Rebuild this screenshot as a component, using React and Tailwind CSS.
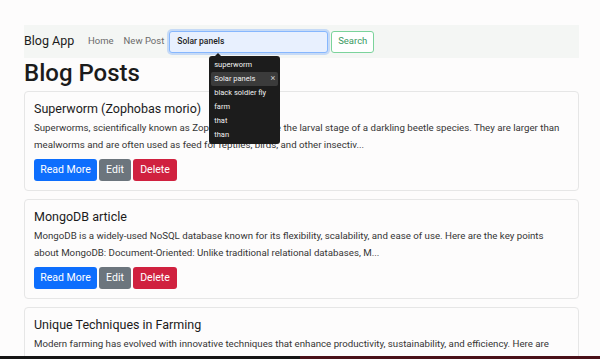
import React from "react";

const posts = [
  {
    title: "Superworm (Zophobas morio)",
    body: "Superworms, scientifically known as Zophobas morio, are the larval stage of a darkling beetle species. They are larger than mealworms and are often used as feed for reptiles, birds, and other insectiv...",
  },
  {
    title: "MongoDB article",
    body: "MongoDB is a widely-used NoSQL database known for its flexibility, scalability, and ease of use. Here are the key points about MongoDB: Document-Oriented: Unlike traditional relational databases, M...",
  },
  {
    title: "Unique Techniques in Farming",
    body: "Modern farming has evolved with innovative techniques that enhance productivity, sustainability, and efficiency. Here are some unique techniques that are transforming agriculture: Hydroponics: D...",
  },
];

const suggestions = ["superworm", "Solar panels", "black soldier fly", "farm", "that", "than"];

function PostCard({ post }) {
  return (
    <div className="mb-[8px] rounded-[4px] border border-[#e6e6e6] bg-[#fdfcfc] px-[9px] pt-[9px] pb-[9px]">
      <h5 className="mb-[2px] text-[12.5px] leading-[16px] text-[#1b1b1b]">{post.title}</h5>
      <p className="text-[9.7px] leading-[17px] text-[#353535]">{post.body}</p>
      <div className="mt-[6px] flex gap-[2px]">
        <button className="h-[22px] w-[63px] rounded-[3px] bg-[#0d6efd] text-[10.5px] text-white">Read More</button>
        <button className="h-[22px] w-[32px] rounded-[3px] bg-[#6c757d] text-[10.5px] text-white">Edit</button>
        <button className="h-[22px] w-[44px] rounded-[3px] bg-[#d0213f] text-[10.5px] text-white">Delete</button>
      </div>
    </div>
  );
}

export default function App() {
  return (
    <div
      className="flex h-[359px] w-[600px] flex-col overflow-hidden bg-[#fdfcfc]"
      style={{ fontFamily: 'Roboto, "Noto Sans", sans-serif' }}
    >
      <div className="flex-1 overflow-hidden pl-[24px] pr-[21px] pt-[25px]">
        {/* Navbar */}
        <nav className="flex h-[33px] items-center bg-[#f4f6f4]">
          <span className="w-[49px] text-[12.5px] whitespace-nowrap text-[#1b1b1b]">Blog App</span>
          <a className="ml-[15px] text-[9.5px] text-[#6a6a6a]">Home</a>
          <a className="ml-[10px] text-[9.5px] text-[#6a6a6a]">New Post</a>
          <div className="relative ml-[5px]">
            <div className="flex h-[22px] w-[159px] items-center rounded-[3px] border border-[#86b7fe] bg-[#e8f0fe] px-[7px] text-[8.5px] font-medium text-[#222] shadow-[0_0_0_2px_rgba(13,110,253,0.2)]">
              Solar panels
            </div>
            {/* autocomplete popup */}
            <div className="absolute left-[40px] top-[25px] z-10 w-[71px] rounded-[3px] bg-[#1c1c1c] px-[2px] py-[2px]">
              <div className="absolute -top-[3px] left-[6px] h-0 w-0 border-x-[3px] border-b-[3px] border-x-transparent border-b-[#1c1c1c]" />
              {suggestions.map((s, i) => (
                <div
                  key={s}
                  className={
                    "flex h-[14px] items-center justify-between rounded-[2px] px-[3px] text-[7.5px] text-[#f2f2f2] " +
                    (i === 1 ? "bg-[#3b3b3b]" : "")
                  }
                >
                  <span>{s}</span>
                  {i === 1 && <span className="text-[9px] text-[#ccc]">×</span>}
                </div>
              ))}
            </div>
          </div>
          <button className="ml-[3px] h-[22px] w-[43px] rounded-[3px] border border-[#7bd39b] bg-white text-[9.5px] text-[#3c9a5f]">
            Search
          </button>
        </nav>

        <h1 className="mt-[1px] mb-[3px] text-[24px] leading-[29px] font-medium text-[#1b1b1b]">Blog Posts</h1>

        {posts.map((p) => (
          <PostCard key={p.title} post={p} />
        ))}
      </div>
      <div className="flex h-[3px] shrink-0">
        <div className="w-[300px] bg-[#151515]" />
        <div className="flex-1 bg-[#4a1018]" />
      </div>
    </div>
  );
}
